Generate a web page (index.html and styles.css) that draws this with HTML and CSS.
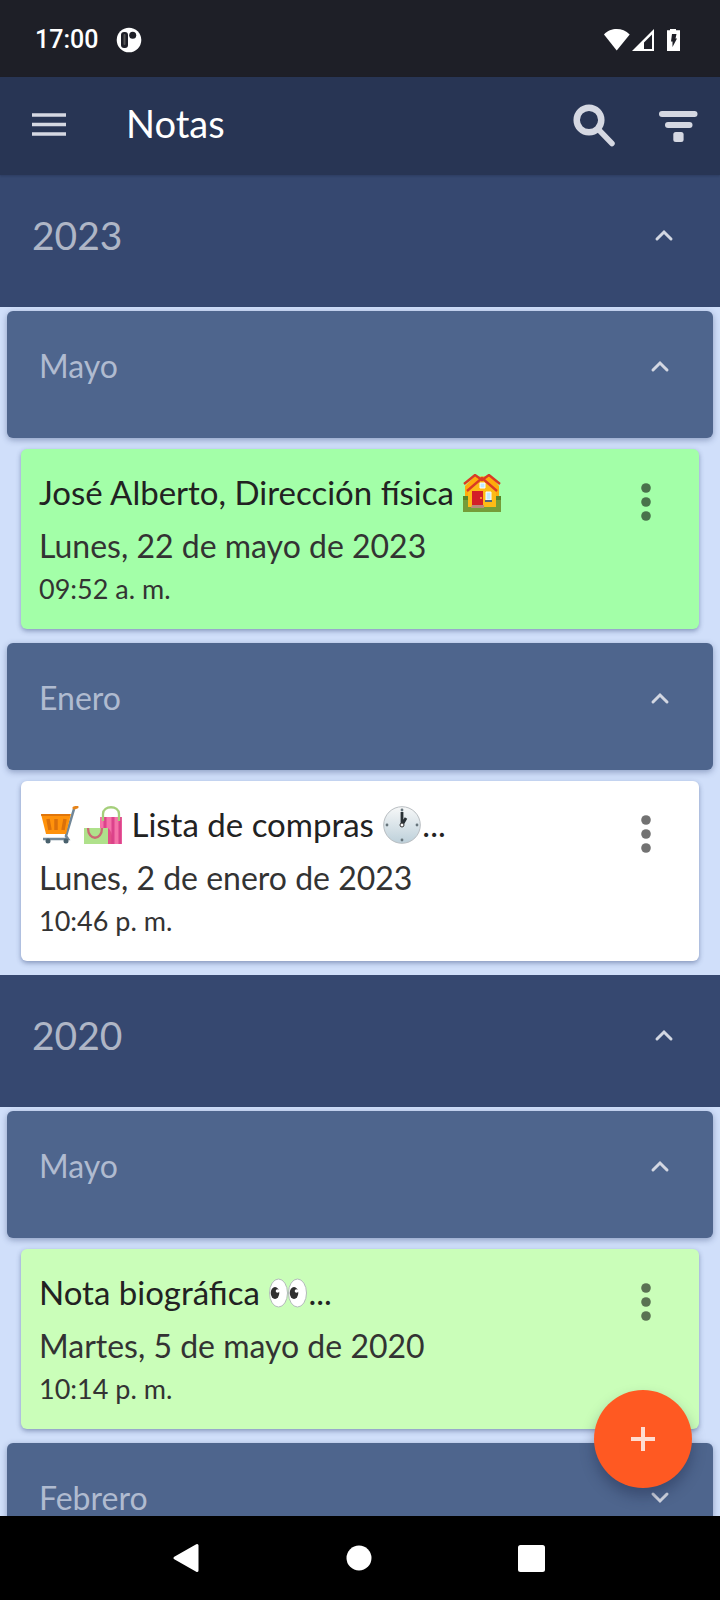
FILE: index.html
```html
<!DOCTYPE html>
<html lang="es">
<head>
<meta charset="utf-8">
<meta name="viewport" content="width=device-width, initial-scale=1">
<title>Notas</title>
<link rel="stylesheet" href="styles.css">
</head>
<body class="screen">
<svg class="sprite" aria-hidden="true">
  <symbol id="up" viewBox="0 0 20 14"><path d="M3 11 10 4l7 7" fill="none" stroke="currentColor" stroke-width="3" stroke-linecap="round"/></symbol>
  <symbol id="down" viewBox="0 0 20 14"><path d="M3 3l7 7 7-7" fill="none" stroke="currentColor" stroke-width="3" stroke-linecap="round"/></symbol>
  <symbol id="more" viewBox="0 0 10 38"><circle cx="5" cy="5" r="4.8"/><circle cx="5" cy="19" r="4.8"/><circle cx="5" cy="33" r="4.8"/></symbol>
</svg>

<div class="status">
  <span class="clock">17:00</span>
  <svg class="status-app" viewBox="0 0 26 26" aria-hidden="true"><circle cx="13" cy="13" r="12.3" fill="#fff"/><rect x="5" y="5" width="7" height="16" rx="3" fill="#1e1f27"/><rect x="7.500" y="7" width="2" height="11" rx="1" fill="#555"/><circle cx="16.700" cy="8.300" r="3.500" fill="#1e1f27"/></svg>
  <svg class="status-icons" viewBox="0 0 76 24" aria-hidden="true">
    <path d="M0 6.500C3.500 2.500 8 1 12.700 1s9.300 1.500 13 5.500L12.700 22.500z" fill="#fff"/>
    <path fill="#fff" fill-rule="evenodd" d="M28 23 50 1v22zM48 6.500 40 14.500V21h8z"/>
    <path fill="#fff" d="M66 2.200V1h6v1.200h4V23H63V2.200z"/>
    <path fill="#1e1f27" d="M68 6h4.500l-1 4.500H73L68.500 19v-5.500H67z"/>
  </svg>
</div>

<header class="appbar">
  <button class="icon-btn" type="button" aria-label="Abrir menú"><svg width="34" height="26" viewBox="0 0 34 26"><path d="M0 2h34M0 11.500h34M0 21h34" stroke="currentColor" stroke-width="3.500"/></svg></button>
  <h1 class="title">Notas</h1>
  <button class="icon-btn" type="button" aria-label="Buscar"><svg width="44" height="44" viewBox="0 0 44 44"><circle cx="16" cy="16" r="12.300" fill="none" stroke="currentColor" stroke-width="6.500"/><path d="m26 26 13 13.500" stroke="currentColor" stroke-width="5.500" stroke-linecap="round"/></svg></button>
  <button class="icon-btn" type="button" aria-label="Ordenar"><svg width="39" height="32" viewBox="0 0 39 32"><g fill="currentColor"><rect y="1" width="38.500" height="6" rx="3"/><rect x="6" y="12" width="27.500" height="6" rx="3"/><rect x="14.300" y="22" width="10.300" height="10" rx="2.500"/></g></svg></button>
</header>

<main class="content">
  <div class="list">
    <section>
      <button class="year" type="button" aria-expanded="true">2023<svg class="chevron"><use href="#up"/></svg></button>
      <div class="months">
        <button class="month" type="button" aria-expanded="true">Mayo<svg class="chevron"><use href="#up"/></svg></button>
        <article class="note mint">
          <div class="note-text">
            <h2 class="note-title">José Alberto, Dirección física
              <svg class="emoji" viewBox="0 0 38 38" role="img" aria-label="casas"><path fill="#ffab0b" d="M2 12 11 3l17-1 8 10v18H2z"/><path fill="#fdbb16" d="M5 16 19 5l14 11v19H5z"/><path fill="#759d38" d="M0 22h5v11h28V22h5v16H0z"/><path fill="#598427" d="M0 22h5v4H0zM33 22h5v4h-5z"/><path fill="#fdbb16" d="M5 22h28v10H5z"/><path fill="none" stroke="#d93b25" stroke-width="2.400" d="m1 10 11-9 7 5 7-5 11 9M4 17 19 4l15 13"/><path fill="#d31f28" d="M9 17h11v14H9z"/><path fill="#b78a7a" d="M9 31h12v3H8z"/><path fill="#bfeaff" stroke="#fff" d="M23 18h5v8h-5zM17 9h5v5h-5z"/><path stroke="#55687a" stroke-width="2" d="M22 27h7"/><circle cx="18" cy="24" r="1" fill="#ffb52b"/></svg></h2>
            <p class="note-date">Lunes, 22 de mayo de 2023</p>
            <p class="note-time">09:52 a. m.</p>
          </div>
          <button class="more" type="button" aria-label="Opciones de la nota"><svg width="10" height="38"><use href="#more"/></svg></button>
        </article>

        <button class="month" type="button" aria-expanded="true">Enero<svg class="chevron"><use href="#up"/></svg></button>
        <article class="note white">
          <div class="note-text">
            <h2 class="note-title"><svg class="emoji" viewBox="0 0 38 38" role="img" aria-label="carrito"><path fill="none" stroke="#718798" stroke-width="2.600" d="M34 3 26 30 28 33H3"/><path stroke="#e78419" stroke-width="3" stroke-linecap="round" d="m34 2 3-1"/><path fill="#ff920b" d="M1 8h30l-5 20H6z"/><path stroke="#db710b" stroke-width="3.500" d="m8 13 2 11M16 13v11M25 13l-2 11"/><path stroke="#d76c0b" stroke-width="1.500" d="M1 9h29"/><circle cx="8" cy="35" r="2.500" fill="#49616d"/><circle cx="26" cy="35" r="2.500" fill="#49616d"/></svg><svg class="emoji next" viewBox="0 0 38 38" role="img" aria-label="bolsas de compras"><path fill="#f573a9" d="M16 11h22v27H16z"/><path stroke="#dc438b" stroke-width="3" d="M21 11v27M29 11v27M36 11v27"/><path fill="none" stroke="#a5cf7b" stroke-width="2.300" d="M19 15V8c0-9 16-9 16 0v7"/><path fill="#afe18b" d="M0 22h24v16H0z"/><path fill="#d83e7c" opacity=".7" d="M24 22c4 3 5 10 4 16h-4z"/><path fill="none" stroke="#ca6974" stroke-width="2.300" d="M4 22c0 13 14 13 14 0"/></svg>
              Lista de compras
              <svg class="emoji" viewBox="0 0 38 38" role="img" aria-label="la una en punto"><defs><linearGradient id="face" x2="0" y2="1"><stop stop-color="#f7f8f8"/><stop offset="1" stop-color="#bdd0da"/></linearGradient></defs><circle cx="19" cy="19" r="18.300" fill="url(#face)" stroke="#b9bec2"/><g fill="#66747b"><circle cx="19" cy="4" r="1.400"/><circle cx="34" cy="19" r="1.400"/><circle cx="19" cy="34" r="1.400"/><circle cx="4" cy="19" r="1.400"/></g><path stroke="#293034" stroke-width="2.800" d="M19 19V6M19 19l4-7"/><circle cx="19" cy="19" r="2" fill="#fff" stroke="#333"/></svg>...</h2>
            <p class="note-date">Lunes, 2 de enero de 2023</p>
            <p class="note-time">10:46 p. m.</p>
          </div>
          <button class="more" type="button" aria-label="Opciones de la nota"><svg width="10" height="38"><use href="#more"/></svg></button>
        </article>
      </div>
    </section>

    <section>
      <button class="year" type="button" aria-expanded="true">2020<svg class="chevron"><use href="#up"/></svg></button>
      <div class="months">
        <button class="month" type="button" aria-expanded="true">Mayo<svg class="chevron"><use href="#up"/></svg></button>
        <article class="note lime">
          <div class="note-text">
            <h2 class="note-title">Nota biográfica
              <svg class="emoji" viewBox="0 0 38 38" role="img" aria-label="ojos"><g fill="#fff" stroke="#b2bbb9"><ellipse cx="9.500" cy="19" rx="9" ry="14"/><ellipse cx="28.500" cy="19" rx="9" ry="14"/></g><g fill="#303030"><ellipse cx="6" cy="19" rx="4.300" ry="6"/><ellipse cx="25" cy="19" rx="4.300" ry="6"/></g><circle cx="8.500" cy="17" r="1.800" fill="#fff"/><circle cx="27.500" cy="17" r="1.800" fill="#fff"/></svg>...</h2>
            <p class="note-date">Martes, 5 de mayo de 2020</p>
            <p class="note-time">10:14 p. m.</p>
          </div>
          <button class="more" type="button" aria-label="Opciones de la nota"><svg width="10" height="38"><use href="#more"/></svg></button>
        </article>
        <button class="month" type="button" aria-expanded="false">Febrero<svg class="chevron"><use href="#down"/></svg></button>
      </div>
    </section>
  </div>
  <button class="fab" type="button" aria-label="Añadir nota"><svg width="26" height="26" viewBox="0 0 26 26"><path d="M13 1v24M1 13h24" stroke="currentColor" stroke-width="4"/></svg></button>
</main>

<nav class="sysnav" aria-label="Sistema">
  <button class="sys-btn" type="button" aria-label="Atrás"><svg width="28" height="30" viewBox="0 0 28 30"><path d="M3 15 25 2.500v25z" fill="#fff" stroke="#fff" stroke-width="3" stroke-linejoin="round"/></svg></button>
  <button class="sys-btn" type="button" aria-label="Inicio"><svg width="26" height="26" viewBox="0 0 26 26"><circle cx="13" cy="13" r="12.500" fill="#fff"/></svg></button>
  <button class="sys-btn" type="button" aria-label="Recientes"><svg width="27" height="27" viewBox="0 0 27 27"><rect width="27" height="27" rx="2.500" fill="#fff"/></svg></button>
</nav>
</body>
</html>
```
FILE: styles.css
```css
* { box-sizing: border-box; }

.screen {
  margin: 0;
  height: 100vh;
  display: flex;
  flex-direction: column;
  background: #d0dffa;
  font-family: Lato, "Open Sans", sans-serif;
  font-weight: 400;
}

button {
  border: 0;
  padding: 0;
  background: none;
  color: inherit;
  font: inherit;
  text-align: left;
  cursor: pointer;
}

svg { display: block; }
.sprite { display: none; }

.status {
  flex: none;
  display: flex;
  align-items: center;
  height: 77px;
  padding: 2px 40px 0 35px;
  background: #1e1f27;
  color: #fff;
}
.clock { font: 500 25px/28px Roboto, sans-serif; }
.status-app { width: 26px; height: 26px; margin-left: 18px; }
.status-icons { width: 76px; height: 24px; margin-left: auto; }

.appbar {
  flex: none;
  display: flex;
  align-items: center;
  height: 98px;
  padding: 0 22px 0 32px;
  background: #283554;
  color: #d5d8e2;
  box-shadow: 0 1px 2px rgba(20, 30, 60, 0.3);
  z-index: 1;
}
.title {
  flex: 1;
  margin: 0 0 0 60px;
  padding-bottom: 6px;
  color: #fff;
  font-size: 38px;
  font-weight: 400;
  line-height: 44px;
}
.icon-btn + .icon-btn { margin-left: 42px; }

.content {
  position: relative;
  flex: 1;
  min-height: 0;
}
.list { height: 100%; overflow: hidden; }

.year, .month {
  display: flex;
  align-items: center;
  justify-content: space-between;
  width: 100%;
}
.year {
  padding: 40px 46px 52px 32px;
  background: #364870;
  color: #afb6c6;
  font-size: 39px;
  line-height: 40px;
}
.months { padding: 4px 7px 0; }
.month {
  padding: 37px 43px 54px 32px;
  border-radius: 6px;
  background: #4e658d;
  color: #b0bbd0;
  font-size: 32px;
  line-height: 36px;
  box-shadow: 0 2px 6px rgba(40, 60, 110, 0.4);
}
.chevron { width: 20px; height: 14px; color: #d3d7e2; }

.note {
  display: flex;
  justify-content: space-between;
  margin: 11px 14px 14px;
  padding: 17px 48px 23px 18px;
  border-radius: 6px;
  color: #333;
  box-shadow: 0 2px 5px rgba(40, 60, 110, 0.45);
}
.mint { background: #a3ffa8; }
.white { background: #fff; }
.lime { background: #cafeb9; }

.note-title, .note-date, .note-time { margin: 0; font-weight: 400; }
.note-title, .note-date { line-height: 53px; }
.note-title { color: #222; font-size: 33px; }
.note-date { font-size: 32px; }
.note-time { font-size: 27px; line-height: 34px; }
.emoji {
  display: inline-block;
  width: 40px;
  height: 38px;
  vertical-align: -7px;
}
.next { margin-left: 4px; }
.more { align-self: flex-start; margin-top: 17px; opacity: 0.55; }

.fab {
  position: absolute;
  right: 28px;
  bottom: 28px;
  display: grid;
  place-items: center;
  width: 98px;
  height: 98px;
  border-radius: 50%;
  background: #ff5922;
  color: #ffdcd0;
  box-shadow: 0 8px 14px rgba(20, 30, 60, 0.35);
}

.sysnav {
  flex: none;
  display: flex;
  align-items: center;
  justify-content: center;
  gap: 146px;
  height: 84px;
  padding-right: 3px;
  background: #000;
}
```
